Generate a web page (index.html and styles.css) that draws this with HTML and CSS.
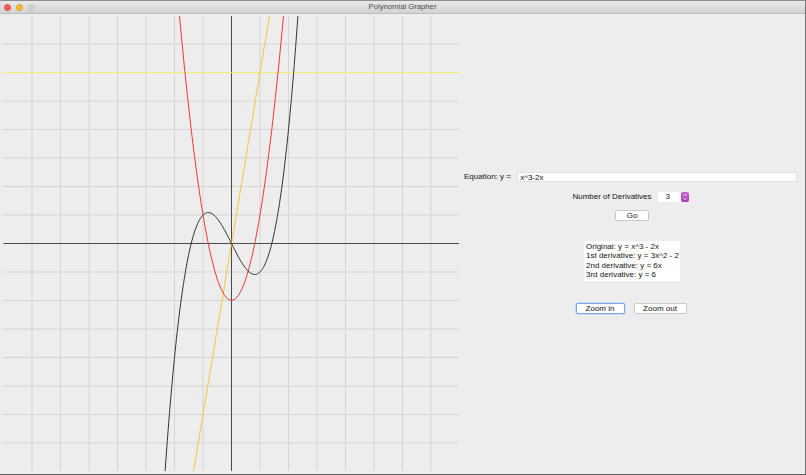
FILE: index.html
```html
<!DOCTYPE html>
<html>
<head>
<meta charset="utf-8">
<title>Polynomial Grapher</title>
<link rel="stylesheet" href="styles.css">
</head>
<body>
<div class="window">
  <div class="titlebar">
    <div class="lights">
      <span class="light red"></span>
      <span class="light yellow"></span>
      <span class="light gray"></span>
    </div>
    <div class="title">Polynomial Grapher</div>
  </div>
  <div class="content">
    <div class="graph">
      <svg width="456" height="455" viewBox="0 0 456 455">
        <g transform="translate(228.5 227.5) scale(28.5 -28.5)">
          <g class="grid">
            <line x1="-7" y1="-8" x2="-7" y2="8"/><line x1="-6" y1="-8" x2="-6" y2="8"/>
            <line x1="-5" y1="-8" x2="-5" y2="8"/><line x1="-4" y1="-8" x2="-4" y2="8"/>
            <line x1="-3" y1="-8" x2="-3" y2="8"/><line x1="-2" y1="-8" x2="-2" y2="8"/>
            <line x1="-1" y1="-8" x2="-1" y2="8"/><line x1="1" y1="-8" x2="1" y2="8"/>
            <line x1="2" y1="-8" x2="2" y2="8"/><line x1="3" y1="-8" x2="3" y2="8"/>
            <line x1="4" y1="-8" x2="4" y2="8"/><line x1="5" y1="-8" x2="5" y2="8"/>
            <line x1="6" y1="-8" x2="6" y2="8"/><line x1="7" y1="-8" x2="7" y2="8"/>
            <line x1="-8" y1="-7" x2="8" y2="-7"/><line x1="-8" y1="-6" x2="8" y2="-6"/>
            <line x1="-8" y1="-5" x2="8" y2="-5"/><line x1="-8" y1="-4" x2="8" y2="-4"/>
            <line x1="-8" y1="-3" x2="8" y2="-3"/><line x1="-8" y1="-2" x2="8" y2="-2"/>
            <line x1="-8" y1="-1" x2="8" y2="-1"/><line x1="-8" y1="1" x2="8" y2="1"/>
            <line x1="-8" y1="2" x2="8" y2="2"/><line x1="-8" y1="3" x2="8" y2="3"/>
            <line x1="-8" y1="4" x2="8" y2="4"/><line x1="-8" y1="5" x2="8" y2="5"/>
            <line x1="-8" y1="6" x2="8" y2="6"/><line x1="-8" y1="7" x2="8" y2="7"/>
          </g>
          <g class="axes">
            <line x1="-8" y1="0" x2="8" y2="0"/>
            <line x1="0" y1="-8" x2="0" y2="8"/>
          </g>
          <line class="d3" x1="-8" y1="6" x2="8" y2="6"/>
          <line class="d2" x1="-1.4" y1="-8.4" x2="1.4" y2="8.4"/>
          <path class="d1" d="M -1.9 8.83 Q 0 -12.83 1.9 8.83"/>
          <path class="f" d="M -2.4 -9.024 C -0.8 15.424 0.8 -15.424 2.4 9.024"/>
        </g>
      </svg>
    </div>
    <div class="controls">
      <div class="equation-row">
        <span class="label">Equation: y = </span>
        <div class="field">x^3-2x</div>
      </div>
      <div class="deriv-row">
        <span class="label">Number of Derivatives</span>
        <div class="spinner">
          <div class="spin-value">3</div>
          <div class="stepper">
            <svg width="8" height="10" viewBox="0 0 8 10">
              <path d="M2.3 4 L4 2.3 L5.7 4" />
              <path d="M2.3 6 L4 7.7 L5.7 6" />
            </svg>
          </div>
        </div>
      </div>
      <div class="go-row"><div class="button go">Go</div></div>
      <div class="output">
        <div>Original: y = x^3 - 2x</div>
        <div>1st derivative: y = 3x^2 - 2</div>
        <div>2nd derivative: y = 6x</div>
        <div>3rd derivative: y = 6</div>
      </div>
      <div class="zoom-row">
        <div class="button zoom-in">Zoom in</div>
        <div class="button zoom-out">Zoom out</div>
      </div>
    </div>
  </div>
</div>
</body>
</html>
```

FILE: styles.css
```css
* { box-sizing: border-box; }
html, body { margin: 0; padding: 0; }
body {
  width: 806px;
  height: 475px;
  background: #ededed;
  font-family: "Liberation Sans", Arial, sans-serif;
  color: #141414;
  overflow: hidden;
}
.window {
  width: 806px;
  height: 475px;
  display: flex;
  flex-direction: column;
  border-top: 1px solid #8e8e8e;
  border-right: 1px solid #707070;
  border-bottom: 1px solid #5e5e5e;
  background: #ededed;
}
.titlebar {
  height: 13px;
  flex: none;
  display: flex;
  align-items: center;
  background: linear-gradient(#e9e9e9, #d2d2d2);
  border-bottom: 1px solid #bdbdbd;
  position: relative;
}
.lights {
  display: flex;
  gap: 5px;
  padding-left: 4px;
}
.light {
  width: 7px;
  height: 7px;
  border-radius: 50%;
  display: block;
}
.light.red { background: #fb5f57; border: 0.5px solid #e1463f; }
.light.yellow { background: #fdbc2e; border: 0.5px solid #de9f24; }
.light.gray { background: #d2d2d2; border: 0.5px solid #c2c2c2; }
.title {
  position: absolute;
  left: 0;
  right: 0;
  top: 0;
  height: 12px;
  line-height: 12px;
  text-align: center;
  font-size: 7.7px;
  color: #4a4a4a;
  pointer-events: none;
}
.content {
  flex: 1;
  display: flex;
}
.graph {
  flex: none;
  width: 456px;
  height: 455px;
  margin: 2px 0 0 3px;
}
.graph svg { display: block; overflow: hidden; }
.graph line, .graph path {
  vector-effect: non-scaling-stroke;
  fill: none;
  stroke-width: 1;
}
.grid line { stroke: #d5d5d5; }
.axes line { stroke: #4a4a4a; }
.d3 { stroke: #f3ee72; }
.d2 { stroke: #f5c63a; }
.d1 { stroke: #ec3b3b; }
.f { stroke: #333333; }

.controls {
  flex: 1;
  display: flex;
  flex-direction: column;
  justify-content: center;
  align-items: center;
  padding-bottom: 3px;
  font-size: 8px;
}
.label { white-space: pre; line-height: 10px; }
.equation-row {
  align-self: stretch;
  display: flex;
  align-items: center;
  margin: 0 8px 0 5px;
}
.field {
  flex: 1;
  height: 10px;
  line-height: 10px;
  margin-left: 4px;
  padding-left: 2px;
  background: #ffffff;
  border: 0.5px solid #e0e0e0;
}
.deriv-row {
  display: flex;
  align-items: center;
  margin-top: 10px;
  margin-right: 3px;
}
.spinner {
  display: flex;
  margin-left: 6px;
  height: 10px;
}
.spin-value {
  width: 23px;
  height: 10px;
  line-height: 10px;
  padding-left: 8px;
  background: #ffffff;
}
.stepper {
  width: 8px;
  height: 10px;
  border-radius: 2px;
  background: linear-gradient(#cc62cf, #a63cb2);
}
.stepper svg { display: block; }
.stepper path { fill: none; stroke: #ffffff; stroke-width: 0.8; }
.go-row { margin-top: 8px; }
.button {
  height: 11px;
  line-height: 10px;
  text-align: center;
  background: #ffffff;
  border: 0.5px solid #c9c9c9;
  border-radius: 2px;
}
.go { width: 34px; }
.output {
  margin-top: 20px;
  width: 96px;
  height: 40px;
  padding: 1px 2px;
  background: #ffffff;
  line-height: 9.6px;
  white-space: nowrap;
}
.zoom-row {
  display: flex;
  gap: 9px;
  margin-top: 22px;
  margin-right: 2px;
}
.zoom-in {
  width: 49px;
  border: 1px solid #7aa7ea;
  box-shadow: 0 0 0 0.5px #a9c8f3;
}
.zoom-out { width: 53px; }
```
